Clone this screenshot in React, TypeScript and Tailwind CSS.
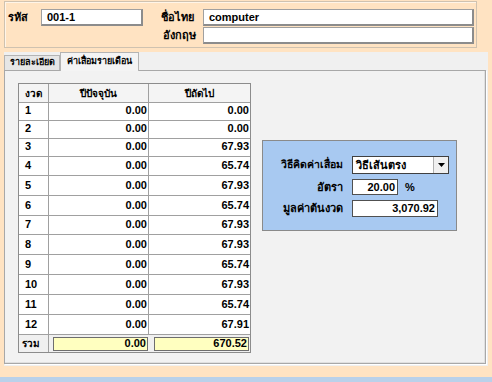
import React from "react";

const rows: [string, string, string, number][] = [
  ["1", "0.00", "0.00", 18],
  ["2", "0.00", "0.00", 18],
  ["3", "0.00", "67.93", 18],
  ["4", "0.00", "65.74", 19],
  ["5", "0.00", "67.93", 20],
  ["6", "0.00", "65.74", 20],
  ["7", "0.00", "67.93", 19],
  ["8", "0.00", "67.93", 20],
  ["9", "0.00", "65.74", 20],
  ["10", "0.00", "67.93", 20],
  ["11", "0.00", "65.74", 20],
  ["12", "0.00", "67.91", 20],
];

function TextBox({ value, className }: { value?: string; className: string }) {
  return (
    <div
      className={
        "bg-white border-t border-l border-[#a0a0a0] border-r-2 border-b-2 border-r-[#8c8c8c] border-b-[#8c8c8c] flex items-center px-[5px] text-[11px] font-bold text-black " +
        className
      }
    >
      {value}
    </div>
  );
}

export default function App() {
  return (
    <div
      className="w-[492px] h-[382px] bg-[#ffe3c2] flex flex-col text-black overflow-hidden"
      style={{ fontFamily: '"Liberation Sans", "Noto Sans", sans-serif' }}
    >
      {/* header group */}
      <div className="mt-[1px] ml-[4px] w-[473px] h-[47px] border border-[#cfc2b0] shadow-[inset_1px_1px_0_#fff5e8] flex flex-col pt-[7px]">
        <div className="flex items-center h-[17px]">
          <span className="ml-[3px] w-[33px] text-[11px] font-bold">รหัส</span>
          <TextBox value="001-1" className="w-[102px] h-[17px]" />
          <span className="ml-[18px] w-[42px] text-[11px] font-bold">ชื่อไทย</span>
          <TextBox value="computer" className="w-[271px] h-[17px]" />
        </div>
        <div className="flex items-center h-[17px] mt-[1px]">
          <span className="ml-[158px] w-[40px] text-[11px] font-bold">อังกฤษ</span>
          <TextBox className="w-[271px] h-[17px]" />
        </div>
      </div>

      {/* tab control */}
      <div className="mt-[4px] ml-[4px] w-[484px] h-[314px] bg-[#f0f0f0] flex flex-col">
        <div className="h-[18px] flex items-end relative z-10">
          <div className="h-[15px] w-[56px] border border-b-0 border-[#b4b4b4] bg-[#e6e6e6] flex items-center justify-center text-[9px] font-bold">
            รายละเอียด
          </div>
          <div className="h-[19px] w-[79px] border border-b-0 border-[#b4b4b4] bg-[#f4f4f4] flex items-start pt-[2px] justify-center text-[9px] font-bold -mb-[1px]">
            ค่าเสื่อมรายเดือน
          </div>
        </div>
        <div className="w-[482px] h-[294px] border border-[#a8a8a8] shadow-[inset_-1px_-1px_0_#e0e0e0,1px_1px_0_#ffffff] bg-[#f2f2f2] flex items-start pl-[13px] pt-[12px]">
          {/* grid */}
          <div className="w-[233px] border border-[#8c8c8c] bg-white flex flex-col text-[11px] font-bold">
            <div className="flex h-[19px] border-b border-[#a0a0a0] bg-[#f4f4f4]">
              <div className="w-[30px] border-r border-[#a0a0a0] flex items-center justify-center text-[10px]">งวด</div>
              <div className="w-[100px] border-r border-[#a0a0a0] flex items-center justify-center text-[10px]">ปีปัจจุบัน</div>
              <div className="flex-1 flex items-center justify-center text-[10px]">ปีถัดไป</div>
            </div>
            {rows.map(([n, a, b, h]) => (
              <div key={n} className="flex border-b border-[#a0a0a0]" style={{ height: h }}>
                <div className="w-[30px] border-r border-[#a0a0a0] flex items-end pb-[2px] pl-[6px]">{n}</div>
                <div className="w-[100px] border-r border-[#a0a0a0] flex items-end justify-end pb-[2px] pr-[1px]">{a}</div>
                <div className="flex-1 flex items-end justify-end pb-[2px] pr-[1px]">{b}</div>
              </div>
            ))}
            <div className="flex h-[17px] bg-[#f0f0f0]">
              <div className="w-[30px] border-r border-[#a0a0a0] flex items-center pl-[3px] text-[10px]">รวม</div>
              <div className="w-[100px] flex items-center pl-[4px] pr-[1px]">
                <div className="flex-1 h-[14px] bg-[#ffffc0] border border-[#6e6e6e] flex items-center justify-end pr-[1px]">0.00</div>
              </div>
              <div className="flex-1 flex items-center pl-[5px] pr-[1px]">
                <div className="flex-1 h-[14px] bg-[#ffffc0] border border-[#6e6e6e] flex items-center justify-end pr-[1px]">670.52</div>
              </div>
            </div>
          </div>

          {/* method box */}
          <div className="ml-[11px] mt-[57px] w-[195px] h-[91px] border border-[#8a8a8a] bg-[#a8c9f1] pt-[15px] grid grid-cols-[80px_auto] gap-x-[9px] content-start text-[11px] font-bold">
            <div className="h-[18px] flex items-center justify-end text-[10.5px]">วิธีคิดค่าเสื่อม</div>
            <div className="w-[97px] h-[18px] bg-white border border-[#404040] flex items-center">
              <span className="flex-1 pl-[3px]">วิธีเส้นตรง</span>
              <div className="w-[15px] h-full bg-[#f0f0f0] border-l border-[#b0b0b0] flex items-center justify-center">
                <svg width="7" height="4" viewBox="0 0 7 4">
                  <path d="M0 0h7L3.5 4z" fill="#000" />
                </svg>
              </div>
            </div>
            <div className="h-[16px] mt-[5px] flex items-center justify-end">อัตรา</div>
            <div className="mt-[5px] flex items-center">
              <div className="w-[46px] h-[16px] bg-white border border-[#505050] flex items-center justify-end pr-[2px]">20.00</div>
              <span className="ml-[7px]">%</span>
            </div>
            <div className="h-[17px] mt-[4px] flex items-center justify-end">มูลค่าต้นงวด</div>
            <div className="mt-[4px] w-[86px] h-[17px] bg-white border border-[#505050] flex items-center justify-end pr-[2px]">3,070.92</div>
          </div>
        </div>
      </div>

      <div className="flex-1" />
      <div className="h-[5px] bg-[#b9d1ea]" />
    </div>
  );
}
